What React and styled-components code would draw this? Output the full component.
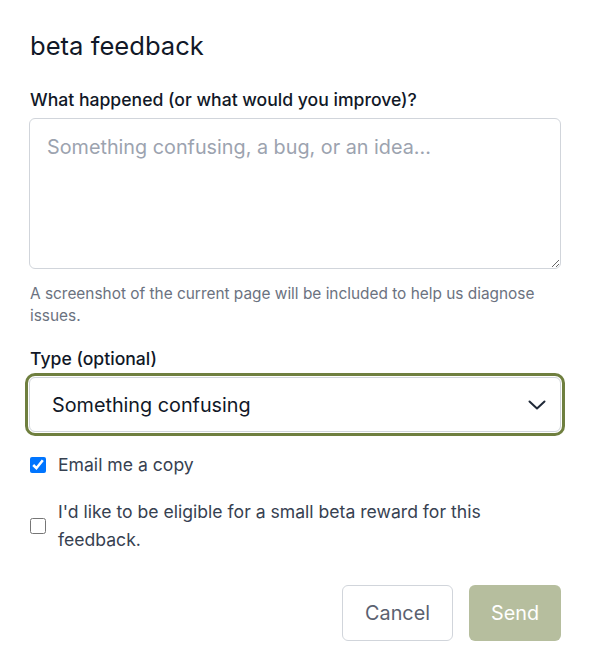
import { useState } from "react";
import styled, { createGlobalStyle } from "styled-components";

const olive = "#6f7f3f";

const GlobalStyle = createGlobalStyle`
  * { box-sizing: border-box; }
  body {
    margin: 0;
    background: #fff;
    font-family: Inter, "Noto Sans", sans-serif;
    color: #111827;
  }
`;

export default function App() {
  const [message, setMessage] = useState("");
  const [type, setType] = useState("confusing");
  const [emailCopy, setEmailCopy] = useState(true);
  const [reward, setReward] = useState(false);

  return (
    <>
      <GlobalStyle />
      <Form onSubmit={(e) => e.preventDefault()}>
        <Title>beta feedback</Title>

        <Field>
          <Label htmlFor="message">What happened (or what would you improve)?</Label>
          <TextArea
            id="message"
            value={message}
            onChange={(e) => setMessage(e.target.value)}
            placeholder="Something confusing, a bug, or an idea..."
          />
          <Hint>
            A screenshot of the current page will be included to help us diagnose
            issues.
          </Hint>
        </Field>

        <Field $top={20}>
          <Label htmlFor="type">Type (optional)</Label>
          <SelectWrap>
            <Select id="type" value={type} onChange={(e) => setType(e.target.value)}>
              <option value="confusing">Something confusing</option>
              <option value="bug">A bug</option>
              <option value="idea">An idea</option>
            </Select>
            <Chevron viewBox="0 0 18 10" aria-hidden="true">
              <path d="M1.5 1.5 L9 8.5 L16.5 1.5" />
            </Chevron>
          </SelectWrap>
        </Field>

        <Checks>
          <CheckRow>
            <Checkbox
              type="checkbox"
              checked={emailCopy}
              onChange={(e) => setEmailCopy(e.target.checked)}
            />
            <CheckText>Email me a copy</CheckText>
          </CheckRow>
          <CheckRow>
            <Checkbox
              type="checkbox"
              checked={reward}
              onChange={(e) => setReward(e.target.checked)}
            />
            <CheckText>
              I'd like to be eligible for a small beta reward for this feedback.
            </CheckText>
          </CheckRow>
        </Checks>

        <Actions>
          <Button type="button">Cancel</Button>
          <Button type="submit" $primary disabled={!message}>
            Send
          </Button>
        </Actions>
      </Form>
    </>
  );
}

const Form = styled.form`
  display: flex;
  flex-direction: column;
  padding: 30px 29px 0 29px;
  width: 590px;
`;

const Title = styled.h2`
  margin: 0;
  font-size: 25.6px;
  line-height: 32px;
  font-weight: 400;
  color: #111827;
  padding-left: 1px;
`;

const Field = styled.div`
  display: flex;
  flex-direction: column;
  margin-top: ${(p) => p.$top ?? 26}px;
`;

const Label = styled.label`
  font-size: 17.6px;
  line-height: 24px;
  font-weight: 500;
  color: #111827;
  margin-bottom: 6px;
  padding-left: 1px;
`;

const TextArea = styled.textarea`
  width: 100%;
  height: 151px;
  padding: 14px 17px;
  font-family: inherit;
  font-size: 19.8px;
  line-height: 28px;
  color: #111827;
  border: 1px solid #d1d5db;
  border-radius: 6px;
  outline: none;
  resize: vertical;
  display: block;

  &::placeholder {
    color: #9ca3af;
  }
`;

const Hint = styled.p`
  margin: 14px 0 0;
  font-size: 15.4px;
  line-height: 22px;
  color: #6b7280;
  padding-left: 1px;
`;

const SelectWrap = styled.div`
  position: relative;
`;

const Select = styled.select`
  width: 100%;
  height: 55px;
  padding: 0 48px 0 22px;
  appearance: none;
  font-family: inherit;
  font-size: 19.8px;
  color: #111827;
  background: #fff;
  border: 1px solid #d1d5db;
  border-radius: 6px;
  outline: none;
  box-shadow: 0 0 0 1px #fff, 0 0 0 4px ${olive};
`;

const Chevron = styled.svg`
  position: absolute;
  right: 15px;
  top: 23px;
  width: 18px;
  height: 10px;
  fill: none;
  stroke: #1f2937;
  stroke-width: 2;
  stroke-linecap: round;
  stroke-linejoin: round;
  pointer-events: none;
`;

const Checks = styled.div`
  display: flex;
  flex-direction: column;
  gap: 19px;
  margin-top: 19px;
`;

const CheckRow = styled.label`
  display: flex;
  align-items: center;
  gap: 12px;
  padding-left: 1px;
  cursor: pointer;
`;

const Checkbox = styled.input`
  width: 16px;
  height: 16px;
  margin: 0;
  flex-shrink: 0;
  accent-color: #0075ff;
`;

const CheckText = styled.span`
  font-size: 17.6px;
  line-height: 28px;
  color: #374151;
  max-width: 450px;
`;

const Actions = styled.div`
  display: flex;
  justify-content: flex-end;
  gap: 16px;
  margin-top: 31px;
`;

const Button = styled.button`
  height: 56px;
  padding: 0 ${(p) => (p.$primary ? "21px" : "22px")};
  font-family: inherit;
  font-size: 19.8px;
  border-radius: 6px;
  cursor: pointer;
  border: 1px solid ${(p) => (p.$primary ? "transparent" : "#d1d5db")};
  background: ${(p) => (p.$primary ? olive : "#fff")};
  color: ${(p) => (p.$primary ? "#fff" : "#5b6170")};

  &:disabled {
    opacity: 0.5;
    cursor: default;
  }
`;
